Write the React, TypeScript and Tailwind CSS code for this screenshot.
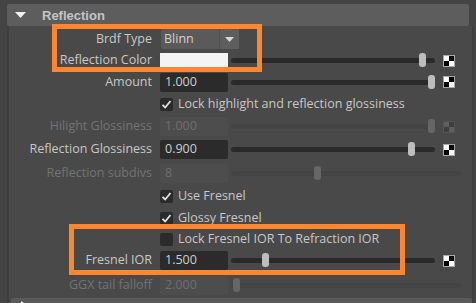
import React from 'react'

const font = { fontFamily: '"Open Sans", "Liberation Sans", Arial, sans-serif' }
const headFont = { fontFamily: '"Liberation Sans", Arial, sans-serif' }

function Checker({ disabled }: { disabled?: boolean }) {
  const a = disabled ? 'bg-[#5e5e5e]' : 'bg-white'
  const b = disabled ? 'bg-[#3e3e3e]' : 'bg-black'
  return (
    <div
      className={`ml-2 grid h-3 w-3 grid-cols-2 grid-rows-2 border ${
        disabled ? 'border-[#555]' : 'border-[#a8a8a8]'
      }`}
    >
      <div className={a} />
      <div className={b} />
      <div className={b} />
      <div className={a} />
    </div>
  )
}

function Slider({
  handle,
  disabled,
  long,
}: {
  handle: string
  disabled?: boolean
  long?: boolean
}) {
  return (
    <div
      className={`relative ml-[3px] h-[5px] rounded-full ${long ? 'w-[230px]' : 'w-[204px]'} ${
        disabled ? 'bg-[#444]' : 'bg-[#2a2a2a]'
      }`}
    >
      <div
        className={`absolute top-[-5px] h-[14px] w-[7px] rounded-[3px] ${handle} ${
          disabled ? 'bg-[#666]' : 'bg-[#bebebe]'
        }`}
      />
    </div>
  )
}

function Field({ value, disabled }: { value: string; disabled?: boolean }) {
  return (
    <div
      className={`flex h-[19px] w-[68px] items-center rounded-[2px] pl-[5px] ${
        disabled ? 'bg-[#4d4d4d] text-[#6e6e6e]' : 'bg-[#2b2b2b] text-[#cfcfcf]'
      }`}
    >
      {value}
    </div>
  )
}

function Row({
  h,
  label,
  disabled,
  children,
}: {
  h: string
  label?: string
  disabled?: boolean
  children?: React.ReactNode
}) {
  return (
    <div className={`flex items-center ${h}`}>
      <div
        className={`w-[151px] shrink-0 whitespace-nowrap pr-2 text-right ${
          disabled ? 'text-[#737373]' : 'text-[#c8c8c8]'
        }`}
      >
        {label}
      </div>
      <div className="flex items-center">{children}</div>
    </div>
  )
}

function Check({ checked, label }: { checked?: boolean; label: string }) {
  return (
    <div className="flex items-center">
      <div className="flex h-[13px] w-[13px] items-center justify-center rounded-[2px] bg-[#2b2b2b]">
        {checked && (
          <svg width="11" height="11" viewBox="0 0 11 11">
            <path d="M1.5 5.8 L4.2 8.5 L9.5 2" fill="none" stroke="#e2e2e2" strokeWidth="1.8" />
          </svg>
        )}
      </div>
      <span className="ml-[5px] whitespace-nowrap text-[#c8c8c8]">{label}</span>
    </div>
  )
}

export default function App() {
  return (
    <div
      className="relative h-[303px] w-[476px] overflow-hidden bg-[#444444] pt-1 text-[12.5px] leading-none"
      style={font}
    >
      {/* section header */}
      <div className="mx-[7px] flex h-[22px] items-center rounded-[2px] bg-[#5d5d5d]" style={headFont}>
        <svg width="11" height="6" viewBox="0 0 11 6" className="ml-2">
          <path d="M0 0 H11 L5.5 6 Z" fill="#f0f0f0" />
        </svg>
        <span className="ml-4 text-[13px] font-bold text-[#c4c4c4]">Reflection</span>
      </div>

      {/* body */}
      <div className="ml-[7px] mr-[2px] border-l-2 border-r-2 border-[#3f3f3f] bg-[#494949] pt-[2px]">
        <Row h="h-[22px]" label="Brdf Type">
          <div className="ml-px flex h-[20px] w-[78px] items-center rounded-[2px] bg-[#5a5a5a]">
            <span className="flex-1 pl-[3px] text-[#d2d2d2]">Blinn</span>
            <div className="flex h-full w-[20px] items-center justify-center border-l border-[#4e4e4e] bg-[#5e5e5e]">
              <svg width="9" height="5" viewBox="0 0 9 5">
                <path d="M0 0 H9 L4.5 5 Z" fill="#d8d8d8" />
              </svg>
            </div>
          </div>
        </Row>
        <Row h="h-[21px]" label="Reflection Color">
          <div className="h-[15px] w-[68px] bg-[#f4f4f4]" />
          <Slider handle="left-[188px]" />
          <Checker />
        </Row>
        <Row h="h-[22px]" label="Amount">
          <Field value="1.000" />
          <Slider handle="left-[197px]" />
          <Checker />
        </Row>
        <Row h="h-[22px]">
          <Check checked label="Lock highlight and reflection glossiness" />
        </Row>
        <Row h="h-[23px]" label="Hilight Glossiness" disabled>
          <Field value="1.000" disabled />
          <Slider handle="left-[197px]" disabled />
          <Checker disabled />
        </Row>
        <Row h="h-[23px]" label="Reflection Glossiness">
          <Field value="0.900" />
          <Slider handle="left-[177px]" />
          <Checker />
        </Row>
        <Row h="h-[24px]" label="Reflection subdivs" disabled>
          <Field value="8" disabled />
          <Slider handle="left-[83px]" disabled long />
        </Row>
        <Row h="h-[23px]">
          <Check checked label="Use Fresnel" />
        </Row>
        <Row h="h-[21px]">
          <Check checked label="Glossy Fresnel" />
        </Row>
        <Row h="h-[20px]">
          <Check label="Lock Fresnel IOR To Refraction IOR" />
        </Row>
        <Row h="h-[23px]" label="Fresnel IOR">
          <Field value="1.500" />
          <Slider handle="left-[31px]" />
          <Checker />
        </Row>
        <Row h="h-[26px]" label="GGX tail falloff" disabled>
          <Field value="2.000" disabled />
          <Slider handle="left-[2px]" disabled long />
        </Row>
        <div className="ml-[2px] flex h-[20px] items-start rounded-[2px] bg-[#5a5a5a] pt-[3px]">
          <svg width="8" height="8" viewBox="0 0 8 8" className="ml-[9px]">
            <path d="M1 0 L7 4 L1 8 Z" fill="#f0f0f0" />
          </svg>
        </div>
      </div>

      {/* annotation boxes */}
      <div className="pointer-events-none absolute left-[52px] top-[24px] h-[48px] w-[210px] border-[5px] border-[#fd8630]" />
      <div className="pointer-events-none absolute left-[69px] top-[224px] h-[51px] w-[336px] border-[5px] border-[#fd8630]" />
    </div>
  )
}
